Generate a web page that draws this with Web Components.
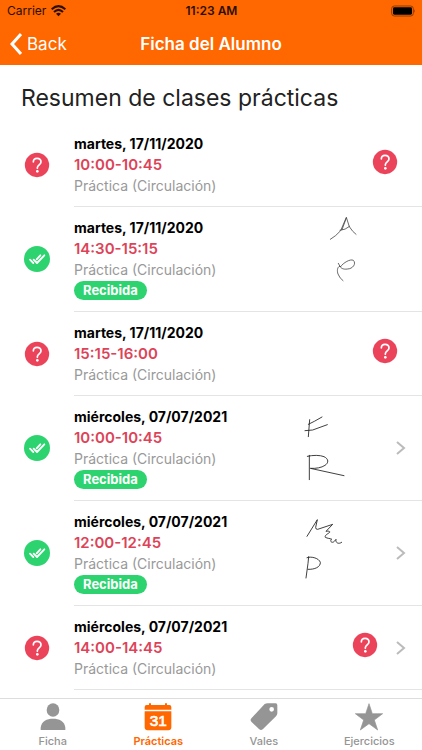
<!DOCTYPE html>
<html lang="es">
<head>
<meta charset="utf-8">
<meta name="viewport" content="width=device-width, initial-scale=1">
<title>Ficha del Alumno</title>
<style>
  html, body { height: 100%; }
  body { margin: 0; background: #fff; color: #000; font-family: Inter, "Liberation Sans", sans-serif; }
</style>
</head>
<body>
<app-shell>
  <app-header slot="header" heading="Ficha del Alumno"></app-header>
  <class-list heading="Resumen de clases prácticas">
    <class-row day="martes, 17/11/2020" hours="10:00-10:45" kind="Práctica (Circulación)"></class-row>
    <class-row day="martes, 17/11/2020" hours="14:30-15:15" kind="Práctica (Circulación)" received>
      <svg slot="signature" width="80" height="84" viewBox="60 261 240 252" fill="none" stroke="#444" stroke-width="2.4" stroke-linecap="round" stroke-linejoin="round" role="img" aria-label="Firmas">
        <path d="M91 328Q108 318 122 302L139 262L148 290Q158 306 168 313M139 264L126 299M120 301Q136 300 149 289"/>
        <path d="M115 400L121 411C130 398 151 386 160 391C170 401 158 417 142 417C130 419 121 414 120 408C111 411 111 424 114 432Q119 445 129 452"/>
      </svg>
    </class-row>
    <class-row day="martes, 17/11/2020" hours="15:15-16:00" kind="Práctica (Circulación)"></class-row>
    <class-row day="miércoles, 07/07/2021" hours="10:00-10:45" kind="Práctica (Circulación)" received more>
      <svg slot="signature" width="80" height="84" viewBox="30 18 240 252" fill="none" stroke="#222" stroke-width="2.6" stroke-linecap="round" stroke-linejoin="round" role="img" aria-label="Firmas">
        <path d="M59 59L55 110M55 73L73 64L96 51M45 92L68 90L112 74"/>
        <path d="M58 166V239M52 169C69 165 90 165 102 170C117 177 116 189 105 196C95 203 78 206 61 205L162 227"/>
      </svg>
    </class-row>
    <class-row day="miércoles, 07/07/2021" hours="12:00-12:45" kind="Práctica (Circulación)" received more>
      <svg slot="signature" width="80" height="84" viewBox="30 333 240 252" fill="none" stroke="#222" stroke-width="2.6" stroke-linecap="round" stroke-linejoin="round" role="img" aria-label="Firmas">
        <path d="M51 409L82 359L77 382Q77 389 83 388L128 373L108 394C113 393 121 393 119 397C113 402 103 406 106 412C112 415 121 416 125 417C118 424 126 431 133 424L138 418C136 428 145 434 155 427"/>
        <path d="M56 470L54 490L48 534M51 473C65 468 87 475 91 487C92 501 74 509 54 508"/>
      </svg>
    </class-row>
    <class-row day="miércoles, 07/07/2021" hours="14:00-14:45" kind="Práctica (Circulación)" more></class-row>
  </class-list>
  <tab-bar slot="footer">
    <tab-item label="Ficha">
      <svg width="28" height="28" viewBox="0 0 84 84" fill="currentColor"><ellipse cx="42" cy="21" rx="19" ry="20"/><path d="M5 81V74C7 54 24 47 42 47S77 54 79 74V81Z"/></svg>
    </tab-item>
    <tab-item label="Prácticas" active>
      <svg width="28" height="28" viewBox="0 0 84 84" fill="currentColor"><path d="M2 20V12Q2 6 8 6H15V1H21V6H63V1H69V6H76Q82 6 82 12V20Z"/><path d="M2 25H82V73Q82 82 73 82H11Q2 82 2 73Z"/><text x="43" y="70" text-anchor="middle" font-family="Liberation Sans, sans-serif" font-size="46" font-weight="400" fill="#fff" stroke="#fff" stroke-width="2">31</text></svg>
    </tab-item>
    <tab-item label="Vales">
      <svg width="28" height="28" viewBox="0 0 84 84" fill="currentColor"><path fill-rule="evenodd" d="M44 3Q48 1 53 1H77Q82 1 82 7V31Q82 36 78 40L39 78Q33 84 27 78L4 56Q-1 51 5 45ZM65 12A7 7 0 1 0 65 26A7 7 0 1 0 65 12Z"/></svg>
    </tab-item>
    <tab-item label="Ejercicios">
      <svg width="28" height="28" viewBox="0 0 84 84" fill="currentColor" stroke="currentColor" stroke-width="2" stroke-linejoin="round"><path d="M42 2L52 32H83L58 51L68 81L42 62L16 81L26 51L1 32H32Z"/></svg>
    </tab-item>
  </tab-bar>
</app-shell>
<script>
class BaseElement extends HTMLElement {
  mount(markup) { this.attachShadow({ mode: "open" }).innerHTML = markup; }
}

customElements.define("app-shell", class extends BaseElement {
  connectedCallback() {
    this.mount(`
      <style>
        :host { display: flex; flex-direction: column; height: 100vh; }
        main { flex: 1; min-height: 0; overflow: hidden; }
      </style>
      <slot name="header"></slot><main><slot></slot></main><slot name="footer"></slot>`);
  }
});

customElements.define("app-header", class extends BaseElement {
  connectedCallback() {
    this.mount(`
      <style>
        :host { display: block; background: #ff6700; color: #fff; }
        .status, header { display: grid; grid-template-columns: 1fr auto 1fr; align-items: center; }
        .status { height: 22px; padding: 0 6px 0 7px; color: #2a1000; font-size: 12px; line-height: 16px; }
        .carrier { display: flex; align-items: center; gap: 5px; }
        .time { font-weight: 600; }
        .battery { justify-self: end; }
        header { height: 43px; padding: 0 8px; }
        button { justify-self: start; display: flex; align-items: center; gap: 5px; padding: 0; border: 0; background: none; color: inherit; font: 400 17px/22px Inter, sans-serif; }
        h1 { margin: 0; font-size: 17px; line-height: 22px; font-weight: 600; }
        svg { display: block; }
      </style>
      <div class="status">
        <span class="carrier">Carrier
          <svg width="15" height="12" viewBox="0 0 45 36" fill="none" stroke="currentColor" stroke-width="6"><path d="M2 13Q22.500-6 43 13M9 21Q22.500 8 36 21"/><path d="M15 26Q22.500 20 30 26L22.500 34Z" fill="currentColor" stroke="none"/></svg>
        </span>
        <span class="time">11:23 AM</span>
        <svg class="battery" width="25" height="12" viewBox="0 0 75 36" fill="none"><rect x="2" y="3" width="65" height="30" rx="8" stroke="#7a3200" stroke-width="2.500"/><rect x="6" y="7" width="57" height="22" rx="4" fill="#000"/><path d="M70 13Q74 18 70 23Z" fill="#7a3200"/></svg>
      </div>
      <header>
        <button type="button"><svg width="14" height="22" viewBox="0 0 14 22" fill="none" stroke="currentColor" stroke-width="3"><path d="M13 1L4 11L13 21"/></svg>Back</button>
        <h1>${this.getAttribute("heading")}</h1>
      </header>`);
  }
});

customElements.define("class-list", class extends BaseElement {
  connectedCallback() {
    this.mount(`
      <style>
        :host { display: block; padding-top: 18px; }
        h2 { margin: 0 21px 10px; color: #222; font-size: 23px; line-height: 30px; font-weight: 400; }
      </style>
      <h2>${this.getAttribute("heading")}</h2>
      <div role="list"><slot></slot></div>`);
  }
});

customElements.define("status-icon", class extends BaseElement {
  connectedCallback() {
    const done = this.hasAttribute("done");
    this.mount(`
      <style>:host { display: block; } svg { display: block; }</style>
      ${done
        ? `<svg width="26" height="26" viewBox="0 0 78 78" role="img" aria-label="Recibida"><circle cx="39" cy="39" r="39" fill="#2dd36f"/><g fill="none" stroke="#fff" stroke-width="5.500" stroke-linecap="round" stroke-linejoin="round"><path d="M18 41L28 51M29 41L39 51L61 28M38 40L49 28"/></g></svg>`
        : `<svg width="26" height="26" viewBox="0 0 78 78" role="img" aria-label="Pendiente"><circle cx="39" cy="39" r="36.500" fill="#eb445a"/><path d="M28 30C28 22 33 19 39 19C46 19 51 23 51 30C51 38 40 39 40 47V49" fill="none" stroke="#fff" stroke-width="5" stroke-linecap="round"/><circle cx="40" cy="58" r="4" fill="#fff"/></svg>`}`);
  }
});

customElements.define("class-row", class extends BaseElement {
  connectedCallback() {
    const done = this.hasAttribute("received");
    const more = this.hasAttribute("more");
    this.setAttribute("role", "listitem");
    this.mount(`
      <style>
        :host { display: grid; grid-template-columns: 50px 1fr; align-items: center; }
        .lead { margin: 0 0 1px 24px; }
        .body { display: flex; align-items: center; margin-left: 24px; padding: 10px 16px 10px 0; border-bottom: 1px solid #e4e4e4; }
        .text { flex: 1; min-width: 0; }
        h3, p { margin: 0; font-size: 15px; line-height: 21px; }
        h3 { font-size: 14px; font-weight: 700; }
        .hours { color: #dd4358; font-weight: 600; }
        .kind { color: #999; font-size: 14px; }
        .badge { display: block; width: fit-content; margin: 1px 0; padding: 0 9px; border-radius: 10px; background: #2dd36f; color: #fff; font-size: 13px; line-height: 19px; font-weight: 700; }
        .pending { margin: 0 8px 6px 0; }
        .signed { display: block; margin-right: 6px; }
        .more .pending { margin-right: 18px; }
        .more .signed { margin-right: 16px; }
        svg, ::slotted(svg) { display: block; }
      </style>
      <status-icon class="lead" ${done ? "done" : ""}></status-icon>
      <div class="body ${more ? "more" : ""}">
        <div class="text">
          <h3>${this.getAttribute("day")}</h3>
          <p class="hours">${this.getAttribute("hours")}</p>
          <p class="kind">${this.getAttribute("kind")}</p>
          ${done ? `<span class="badge">Recibida</span>` : ""}
        </div>
        ${done ? `<slot class="signed" name="signature"></slot>` : `<status-icon class="pending"></status-icon>`}
        ${more ? `<svg width="10" height="16" viewBox="0 0 10 16" fill="none" stroke="#bbb" stroke-width="2"><path d="M1 2L8 8L1 14"/></svg>` : ""}
      </div>`);
  }
});

customElements.define("tab-bar", class extends BaseElement {
  connectedCallback() {
    this.mount(`
      <style>
        :host { display: block; border-top: 1px solid #ddd; background: #fff; }
        nav { display: grid; grid-template-columns: repeat(4, 1fr); height: 51px; }
      </style>
      <nav><slot></slot></nav>`);
  }
});

customElements.define("tab-item", class extends BaseElement {
  connectedCallback() {
    const active = this.hasAttribute("active");
    this.mount(`
      <style>
        :host { display: block; color: ${active ? "#ff6700" : "#959595"}; }
        button { display: flex; flex-direction: column; align-items: center; gap: 3px; width: 100%; padding: 4px 0 0; border: 0; background: none; color: inherit; font: ${active ? 600 : 500} 11px/14px Inter, sans-serif; }
      </style>
      <button type="button" ${active ? 'aria-current="page"' : ""}><slot></slot><span>${this.getAttribute("label")}</span></button>`);
  }
});
</script>
</body>
</html>
